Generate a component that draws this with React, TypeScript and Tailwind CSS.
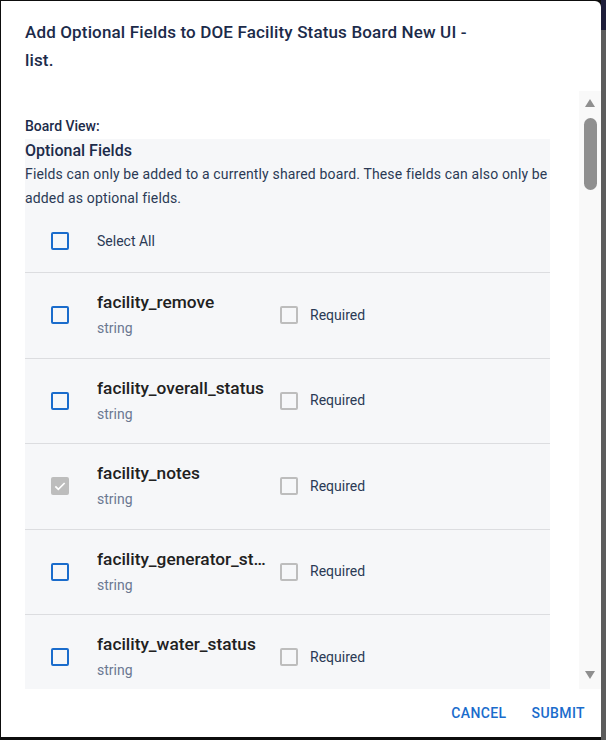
import React from 'react';

const fields = [
    { name: 'facility_remove', type: 'string', checked: false, locked: false },
    { name: 'facility_overall_status', type: 'string', checked: false, locked: false },
    { name: 'facility_notes', type: 'string', checked: true, locked: true },
    { name: 'facility_generator_status', type: 'string', checked: false, locked: false },
    { name: 'facility_water_status', type: 'string', checked: false, locked: false },
    { name: 'facility_power_status', type: 'string', checked: false, locked: false },
];

function BlueBox() {
    return <span className="block w-[18px] h-[18px] rounded-[2px] border-2 border-[#1a6ccc] shrink-0"></span>;
}

function GrayBox() {
    return <span className="block w-[18px] h-[18px] rounded-[2px] border-2 border-[#bdbdbd] shrink-0"></span>;
}

function LockedBox() {
    return (
        <span className="flex items-center justify-center w-[18px] h-[18px] rounded-[2px] bg-[#bdbdbd] shrink-0">
            <svg viewBox="0 0 24 24" className="w-[16px] h-[16px]" fill="none" stroke="#fff" strokeWidth="2.6">
                <path d="M5 12.5l4.5 4.5L19 7.5" />
            </svg>
        </span>
    );
}

export default function App() {
    return (
        <div className="w-[606px] h-[740px] bg-[#0d0d0d] flex" style={{ fontFamily: 'Roboto, "Noto Sans", sans-serif' }}>
            <div className="ml-[1px] mt-[1px] w-[600px] h-[736px] bg-white rounded-tr-[6px] flex flex-col">
                {/* Title */}
                <h2 className="pl-[24px] pt-[17px] text-[17px] leading-[28px] tracking-[0.15px] font-medium text-[#1c2b4a] w-[480px]">
                    Add Optional Fields to DOE Facility Status Board New UI - list.
                </h2>

                {/* Scroll area */}
                <div className="mt-[17px] flex h-[598px]">
                    <div className="flex-1 overflow-hidden pl-[24px] pr-[29px]">
                        <p className="pt-[27px] text-[14px] leading-[16px] font-medium text-[#1c2b4a]">Board View:</p>
                        <div className="mt-[5px] bg-[#f6f7f9]">
                            <h3 className="pt-[1px] text-[16px] leading-[22px] font-medium text-[#1c2b4a]">Optional Fields</h3>
                            <p className="text-[14px] leading-[24px] tracking-[0.15px] text-[#2b3a55]">
                                Fields can only be added to a currently shared board. These fields can also only be added as optional fields.
                            </p>
                            <div className="h-[63px] flex items-center pl-[26px] border-b border-[#dcdde0]">
                                <BlueBox />
                                <span className="ml-[28px] text-[14px] text-[#2b3a55]">Select All</span>
                            </div>
                            {fields.map((f) => (
                                <div key={f.name} className="h-[85.5px] flex items-center pl-[26px] border-b border-[#dcdde0]">
                                    {f.locked ? <LockedBox /> : <BlueBox />}
                                    <div className="ml-[28px] w-[172px] flex flex-col">
                                        <span className="text-[17.3px] leading-[26px] font-medium text-[#212121] truncate">{f.name}</span>
                                        <span className="text-[14px] leading-[26px] text-[#6b7891]">{f.type}</span>
                                    </div>
                                    <div className="ml-[11px] flex items-center">
                                        <GrayBox />
                                        <span className="ml-[12px] text-[14px] text-[#2b3a55]">Required</span>
                                    </div>
                                </div>
                            ))}
                        </div>
                    </div>

                    {/* Scrollbar */}
                    <div className="w-[22px] bg-[#f9f9f9] flex flex-col items-center pt-[8px] pb-[10px]">
                        <svg viewBox="0 0 10 8" className="w-[10px] h-[8px]">
                            <path d="M0 8L5 0L10 8Z" fill="#8f8f8f" />
                        </svg>
                        <div className="mt-[11px] w-[13px] h-[72px] rounded-full bg-[#8f8f8f]"></div>
                        <div className="flex-1"></div>
                        <svg viewBox="0 0 10 8" className="w-[10px] h-[8px]">
                            <path d="M0 0L10 0L5 8Z" fill="#8f8f8f" />
                        </svg>
                    </div>
                </div>

                {/* Footer */}
                <div className="flex-1 flex items-center justify-end pr-[16px] gap-[25px]">
                    <button className="text-[14px] font-medium tracking-[0.4px] text-[#1a6ccc] uppercase">Cancel</button>
                    <button className="text-[14px] font-medium tracking-[0.4px] text-[#1a6ccc] uppercase">Submit</button>
                </div>
            </div>
            <div className="flex-1 bg-[#5c5c5c] flex flex-col">
                <div className="h-[30px] bg-[#1e1e3a]"></div>
            </div>
        </div>
    );
}
